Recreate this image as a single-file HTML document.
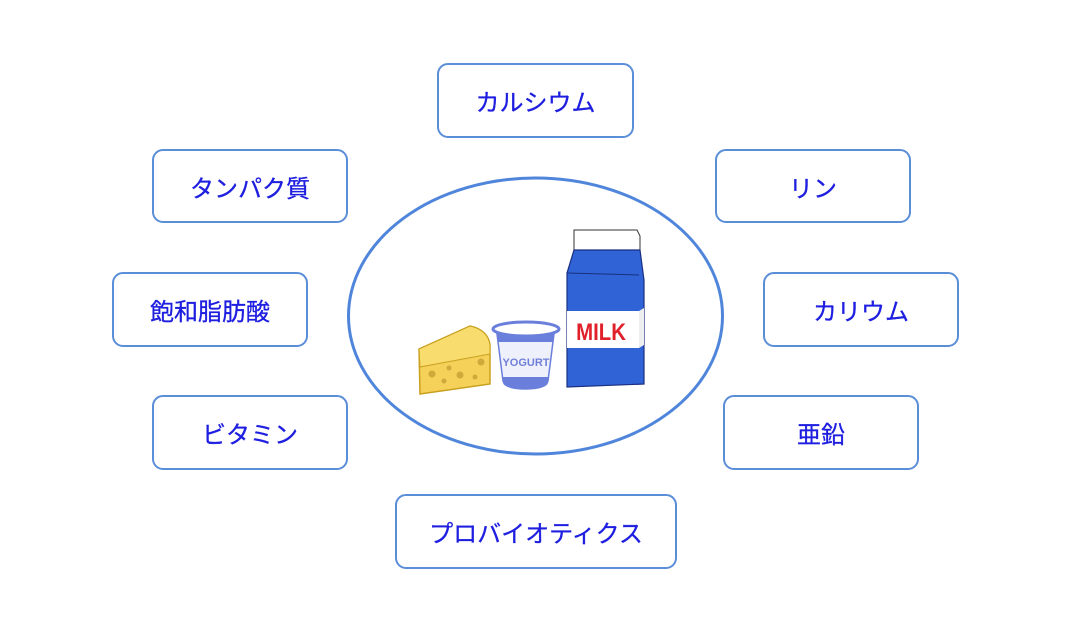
<!DOCTYPE html>
<html><head><meta charset="utf-8"><style>
body{margin:0;width:1078px;height:632px;background:#fff;position:relative;overflow:hidden;font-family:"Liberation Sans","Noto Sans CJK JP",sans-serif}
.b{position:absolute;box-sizing:border-box;border:2px solid #5b8ed8;border-radius:11px;display:flex;align-items:center;justify-content:center;color:#1e1ee0;font-size:24px;background:#fff;-webkit-text-stroke:0.3px #1e1ee0}
</style></head><body>
<div class="b" style="left:437px;top:63px;width:197px;height:75px">カルシウム</div>
<div class="b" style="left:152px;top:149px;width:196px;height:74px">タンパク質</div>
<div class="b" style="left:715px;top:149px;width:196px;height:74px">リン</div>
<div class="b" style="left:112px;top:272px;width:196px;height:75px">飽和脂肪酸</div>
<div class="b" style="left:763px;top:272px;width:196px;height:75px">カリウム</div>
<div class="b" style="left:152px;top:395px;width:196px;height:75px">ビタミン</div>
<div class="b" style="left:723px;top:395px;width:196px;height:75px">亜鉛</div>
<div class="b" style="left:395px;top:494px;width:282px;height:75px">プロバイオティクス</div>
<svg width="1078" height="632" style="position:absolute;left:0;top:0">
<ellipse cx="535.5" cy="316" rx="187" ry="138" fill="none" stroke="#4f86db" stroke-width="3"/>
<path d="M419 349 L470 326 Q488 330 490 345 L490 384 L420 394 Z" fill="#f5d15a" stroke="#c9a020" stroke-width="1.5"/>
<path d="M419 349 L470 326 Q488 330 490 345 L490 354 L420 367 Z" fill="#f8dc6e" stroke="#c9a020" stroke-width="1"/>
<g fill="#cfa93a"><circle cx="432" cy="374" r="3.5"/><circle cx="449" cy="368" r="2.5"/><circle cx="460" cy="375" r="3.5"/><circle cx="444" cy="381" r="2.5"/><circle cx="475" cy="377" r="2.5"/><circle cx="481" cy="362" r="3.5"/></g>
<path d="M497 334 L503 381 Q505 389 526 389 Q546 389 548 381 L554 334 Z" fill="#eef0fb" stroke="#6a7fdc" stroke-width="1.5"/>
<path d="M502 377 L549 377 L548 383 Q546 389 526 389 Q505 389 503 383 Z" fill="#6a7fdc"/>
<path d="M497 334 L554 334 L553 342 L498 342 Z" fill="#6a7fdc"/>
<ellipse cx="526" cy="329" rx="33" ry="7" fill="#fff" stroke="#6a7fdc" stroke-width="3"/>
<text x="526" y="366" font-size="11" font-weight="bold" fill="#7080d8" text-anchor="middle" font-family="Liberation Sans">YOGURT</text>
<path d="M574 230 L637 230 L640 236 L640 250 L574 250 Z" fill="#fff" stroke="#333" stroke-width="1"/>
<path d="M574 250 L640 250 L644 280 L644 384 L567 387 L567 273 Z" fill="#2f63d6" stroke="#1a2f80" stroke-width="1.2"/>
<rect x="567" y="311" width="72" height="37" fill="#fff"/>
<path d="M639 311 L644 308 L644 345 L639 348Z" fill="#eee"/>
<line x1="567" y1="273" x2="639" y2="275" stroke="#1a2f80" stroke-width="1"/>
<text x="0" y="0" font-size="24" font-weight="bold" fill="#e0202a" text-anchor="middle" font-family="Liberation Sans" transform="translate(601 340) scale(0.85 1)">MILK</text>
</svg>
</body></html>
